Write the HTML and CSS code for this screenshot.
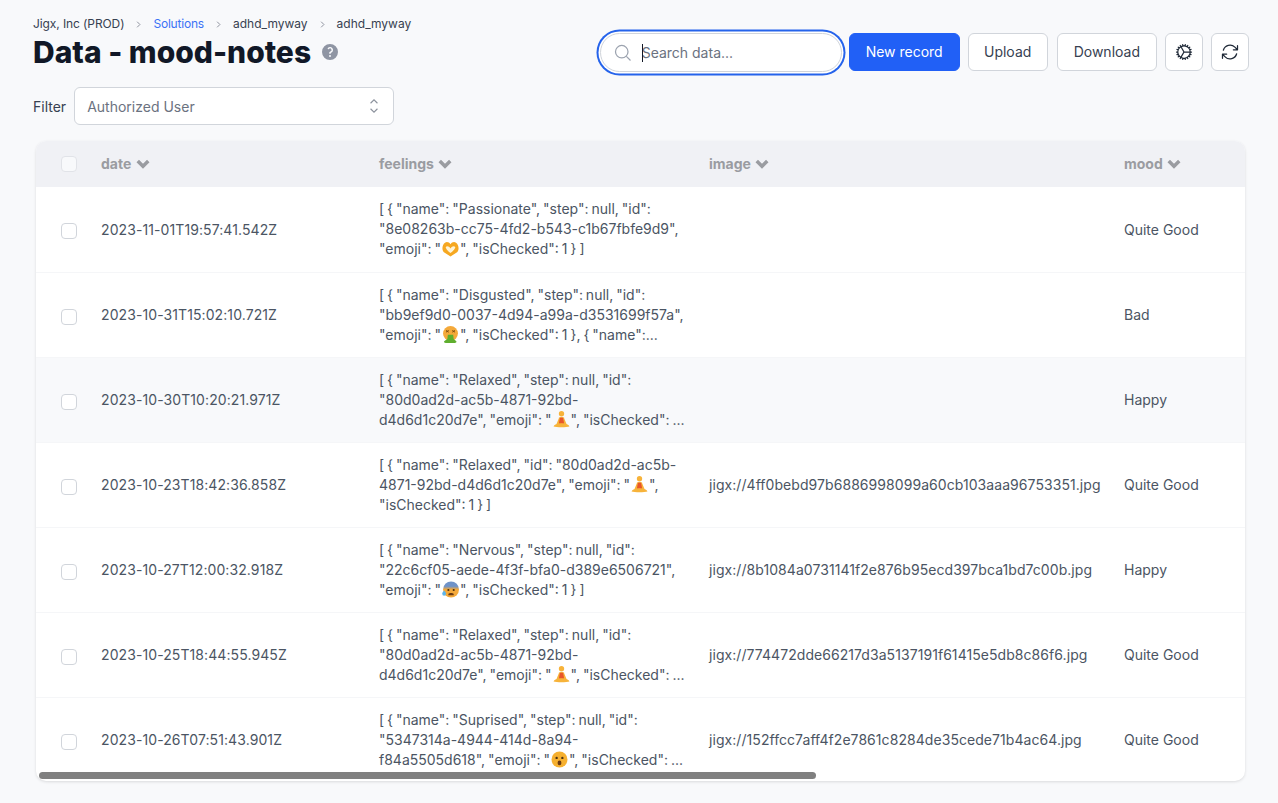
FILE: index.html
```html
<!DOCTYPE html>
<html lang="en">
<head>
    <meta charset="UTF-8">
    <meta name="viewport" content="width=device-width, initial-scale=1.0">
    <title>Data - mood-notes</title>
    <link rel="stylesheet" href="styles.css">
</head>
<body>
    <!-- emoji are drawn once here and reused in the table -->
    <svg class="defs" width="0" height="0">
        <symbol id="e-heart" viewBox="0 0 16 16">
            <path d="M8 15.500 1.800 11.500C-.2 9.800-.2 4.500 2.800 2.500c2-1.200 4-.3 5.200 1.500 1.200-1.800 3.200-2.700 5.200-1.500 3 2 3 7.300 1 9Z" fill="#f6a821"/>
            <path d="M8 8C6.800 5.800 4.500 5.200 3.600 6.500 3 7.500 5.500 10.300 8 12.200c2.500-1.900 5-4.700 4.400-5.700C11.500 5.200 9.200 5.800 8 8Z" fill="#fff4d6"/>
        </symbol>
        <symbol id="e-sick" viewBox="0 0 16 16">
            <circle cx="8" cy="7" r="7" fill="#f4a93a"/>
            <path d="M3.800 4.200 6.300 5.800M6.300 4.200 3.800 5.800M9.700 4.200l2.500 1.600M12.200 4.200 9.700 5.800" stroke="#7a4a10" stroke-width=".9"/>
            <path d="M5.500 8.200h5l.5 4 2.500 2.200c.4 1.200-.5 1.600-1.500 1.600H3.500c-1 0-1.900-.4-1.500-1.600L5 12.200Z" fill="#5fae2e"/>
        </symbol>
        <symbol id="e-lotus" viewBox="0 0 16 16">
            <circle cx="8" cy="2.600" r="2.500" fill="#f7b33a"/>
            <path d="M3.200 12.500 5.800 6.200c.3-.7 4.100-.7 4.400 0l2.600 6.300Z" fill="#f7b33a"/>
            <path d="M6.500 6.400h3l1 5.600h-5Z" fill="#e8562a"/>
            <path d="M.5 14.600c.5-1.800 3-3 7.500-3s7 1.200 7.500 3c-2.500 1-12.500 1-15 0Z" fill="#f7b33a"/>
        </symbol>
        <symbol id="e-fear" viewBox="0 0 16 16">
            <defs>
                <linearGradient id="fear-fill" x1="0" y1="0" x2="0" y2="1">
                    <stop offset="0.3" stop-color="#6f93c9"/>
                    <stop offset="0.5" stop-color="#f4a93a"/>
                </linearGradient>
            </defs>
            <circle cx="8.500" cy="8" r="7.500" fill="url(#fear-fill)"/>
            <circle cx="6" cy="8.500" r="1" fill="#4a2f10"/>
            <circle cx="11" cy="8.500" r="1" fill="#4a2f10"/>
            <path d="M6 12.300c1-1.300 4-1.300 5 0v1H6Z" fill="#6b3a12"/>
            <path d="M2 9c1.200 1.400 1.800 2.200 1.800 3a1.800 1.800 0 0 1-3.600 0c0-.8.600-1.600 1.800-3Z" fill="#5db4ea"/>
        </symbol>
        <symbol id="e-hush" viewBox="0 0 16 16">
            <circle cx="8" cy="8" r="7.500" fill="#f6b02f"/>
            <circle cx="5.300" cy="6.500" r="1.100" fill="#4a2f10"/>
            <circle cx="10.700" cy="6.500" r="1.100" fill="#4a2f10"/>
            <ellipse cx="8" cy="11.200" rx="1.800" ry="2.200" fill="#6b3a12"/>
        </symbol>
    </svg>

    <div class="page">
        <header class="page-header">
            <div>
                <nav class="crumbs">
                    <span class="crumb-tight">Jigx, Inc (PROD)</span>
                    <svg class="crumb-arrow" viewBox="0 0 24 24"><path d="M8.250 4.500l7.500 7.500-7.500 7.500"/></svg>
                    <a class="crumb-link">Solutions</a>
                    <svg class="crumb-arrow" viewBox="0 0 24 24"><path d="M8.250 4.500l7.500 7.500-7.500 7.500"/></svg>
                    <span>adhd_myway</span>
                    <svg class="crumb-arrow" viewBox="0 0 24 24"><path d="M8.250 4.500l7.500 7.500-7.500 7.500"/></svg>
                    <span>adhd_myway</span>
                </nav>
                <div class="title-row">
                    <h1>Data - mood-notes</h1>
                    <svg class="help" viewBox="0 0 20 20"><path fill-rule="evenodd" d="M18 10a8 8 0 11-16 0 8 8 0 0116 0zM8.940 6.940a.75.75 0 11-1.061-1.061 3 3 0 112.871 5.026v.345a.75.75 0 01-1.500 0v-.5c0-.72.57-1.172 1.081-1.287A1.500 1.500 0 108.940 6.940zM10 15a1 1 0 100-2 1 1 0 000 2z"/></svg>
                </div>
            </div>
            <div class="actions">
                <label class="search">
                    <svg class="search-icon" viewBox="0 0 24 24"><path d="M21 21l-5.197-5.197m0 0A7.500 7.500 0 105.196 5.196a7.500 7.500 0 0010.607 10.607z"/></svg>
                    <input type="text" placeholder="Search data...">
                    <span class="caret"></span>
                </label>
                <button class="btn btn-primary">New record</button>
                <button class="btn btn-upload">Upload</button>
                <button class="btn">Download</button>
                <button class="btn btn-icon">
                    <svg viewBox="0 0 24 24"><path d="M4.500 12a7.500 7.500 0 0015 0m-15 0a7.500 7.500 0 1115 0m-15 0H3m16.500 0H21m-1.500 0H12m-8.457 3.077l1.410-.513m14.095-5.130l1.410-.513M5.106 17.785l1.150-.964m11.490-9.642l1.149-.964M7.501 19.795l.75-1.300m7.500-12.990l.75-1.300m-6.063 16.658l.26-1.477m2.605-14.772l.26-1.477m0 17.726l-.26-1.477M10.698 4.614l-.26-1.477M16.500 19.794l-.75-1.299M7.500 4.205L12 12m6.894 5.785l-1.149-.964M6.256 7.178l-1.150-.964m15.352 8.864l-1.410-.513M4.954 9.435l-1.410-.514M12.002 12l-3.750 6.495"/></svg>
                </button>
                <button class="btn btn-icon">
                    <svg viewBox="0 0 24 24"><path d="M16.023 9.348h4.992v-.001M2.985 19.644v-4.992m0 0h4.992m-4.993 0l3.181 3.183a8.250 8.250 0 0013.803-3.700M4.031 9.865a8.250 8.250 0 0113.803-3.700l3.181 3.182m0-4.991v4.990"/></svg>
                </button>
            </div>
        </header>

        <div class="filter">
            <span class="filter-label">Filter</span>
            <div class="select">
                <span>Authorized User</span>
                <svg viewBox="0 0 24 24"><path d="M8.250 15L12 18.750 15.750 15m-7.500-6L12 5.250 15.750 9"/></svg>
            </div>
        </div>

        <div class="card">
            <table>
                <colgroup>
                    <col class="col-check"><col class="col-date"><col class="col-feelings"><col class="col-image"><col>
                </colgroup>
                <thead>
                    <tr>
                        <th><span class="check"></span></th>
                        <th>date <svg class="sort" viewBox="0 0 12 8"><path d="M1.500 1.500 6 6l4.500-4.500"/></svg></th>
                        <th>feelings <svg class="sort" viewBox="0 0 12 8"><path d="M1.500 1.500 6 6l4.500-4.500"/></svg></th>
                        <th>image <svg class="sort" viewBox="0 0 12 8"><path d="M1.500 1.500 6 6l4.500-4.500"/></svg></th>
                        <th>mood <svg class="sort" viewBox="0 0 12 8"><path d="M1.500 1.500 6 6l4.500-4.500"/></svg></th>
                    </tr>
                </thead>
                <tbody>
                    <tr>
                        <td><span class="check"></span></td>
                        <td class="date">2023-11-01T19:57:41.542Z</td>
                        <td class="json">[ { "name": "Passionate", "step": null, "id":<br>"8e08263b-cc75-4fd2-b543-c1b67fbfe9d9",<br>"emoji": "<svg class="emoji"><use href="#e-heart"/></svg>", "isChecked": 1 } ]</td>
                        <td class="file"></td>
                        <td>Quite Good</td>
                    </tr>
                    <tr>
                        <td><span class="check"></span></td>
                        <td class="date">2023-10-31T15:02:10.721Z</td>
                        <td class="json">[ { "name": "Disgusted", "step": null, "id":<br>"bb9ef9d0-0037-4d94-a99a-d3531699f57a",<br>"emoji": "<svg class="emoji"><use href="#e-sick"/></svg>", "isChecked": 1 }, { "name":...</td>
                        <td class="file"></td>
                        <td>Bad</td>
                    </tr>
                    <tr class="row-hover">
                        <td><span class="check"></span></td>
                        <td class="date">2023-10-30T10:20:21.971Z</td>
                        <td class="json">[ { "name": "Relaxed", "step": null, "id":<br>"80d0ad2d-ac5b-4871-92bd-<br>d4d6d1c20d7e", "emoji": "<svg class="emoji"><use href="#e-lotus"/></svg>", "isChecked": ...</td>
                        <td class="file"></td>
                        <td>Happy</td>
                    </tr>
                    <tr>
                        <td><span class="check"></span></td>
                        <td class="date">2023-10-23T18:42:36.858Z</td>
                        <td class="json">[ { "name": "Relaxed", "id": "80d0ad2d-ac5b-<br>4871-92bd-d4d6d1c20d7e", "emoji": "<svg class="emoji"><use href="#e-lotus"/></svg>",<br>"isChecked": 1 } ]</td>
                        <td class="file">jigx://4ff0bebd97b6886998099a60cb103aaa96753351.jpg</td>
                        <td>Quite Good</td>
                    </tr>
                    <tr>
                        <td><span class="check"></span></td>
                        <td class="date">2023-10-27T12:00:32.918Z</td>
                        <td class="json">[ { "name": "Nervous", "step": null, "id":<br>"22c6cf05-aede-4f3f-bfa0-d389e6506721",<br>"emoji": "<svg class="emoji"><use href="#e-fear"/></svg>", "isChecked": 1 } ]</td>
                        <td class="file">jigx://8b1084a0731141f2e876b95ecd397bca1bd7c00b.jpg</td>
                        <td>Happy</td>
                    </tr>
                    <tr>
                        <td><span class="check"></span></td>
                        <td class="date">2023-10-25T18:44:55.945Z</td>
                        <td class="json">[ { "name": "Relaxed", "step": null, "id":<br>"80d0ad2d-ac5b-4871-92bd-<br>d4d6d1c20d7e", "emoji": "<svg class="emoji"><use href="#e-lotus"/></svg>", "isChecked": ...</td>
                        <td class="file">jigx://774472dde66217d3a5137191f61415e5db8c86f6.jpg</td>
                        <td>Quite Good</td>
                    </tr>
                    <tr>
                        <td><span class="check"></span></td>
                        <td class="date">2023-10-26T07:51:43.901Z</td>
                        <td class="json">[ { "name": "Suprised", "step": null, "id":<br>"5347314a-4944-414d-8a94-<br>f84a5505d618", "emoji": "<svg class="emoji"><use href="#e-hush"/></svg>", "isChecked": ...</td>
                        <td class="file">jigx://152ffcc7aff4f2e7861c8284de35cede71b4ac64.jpg</td>
                        <td>Quite Good</td>
                    </tr>
                </tbody>
            </table>
            <div class="scroll-thumb"></div>
        </div>
    </div>
</body>
</html>
```

FILE: styles.css
```css
* {
    box-sizing: border-box;
}

body {
    margin: 0;
    height: 803px;
    overflow: hidden;
    background-color: #f8f9fb;
    font-family: Inter, "Noto Sans", sans-serif;
    font-size: 14px;
    color: #4b5563;
}

.defs {
    position: absolute;
}

.page {
    padding: 16px 29px 0 33px;
}

/* header */
.page-header {
    display: flex;
    justify-content: space-between;
    align-items: flex-start;
}

.crumbs {
    display: flex;
    align-items: center;
    height: 16px;
    font-size: 12px;
    line-height: 16px;
    color: #374151;
}

.crumb-tight {
    letter-spacing: -0.1px;
}

.crumb-link {
    letter-spacing: -0.2px;
    color: #3b72f6;
}

.crumb-arrow {
    width: 9px;
    height: 9px;
    margin: 0 10px;
    fill: none;
    stroke: #6b7280;
    stroke-width: 2;
}

.title-row {
    display: flex;
    align-items: center;
    gap: 9px;
    margin-top: 2px;
}

h1 {
    margin: 0;
    font-size: 30px;
    line-height: 36px;
    font-weight: 800;
    color: #111827;
}

.help {
    width: 20px;
    height: 20px;
    fill: #8f95a3;
}

.actions {
    display: flex;
    gap: 8px;
    padding-top: 17px;
}

.search {
    position: relative;
    display: flex;
    align-items: center;
    gap: 9px;
    width: 242px;
    height: 39px;
    margin-right: -1px;
    padding: 0 12px;
    background: #fff;
    border: 1px solid #d1d5db;
    border-radius: 20px;
    box-shadow: 0 0 0 1.500px #fff, 0 0 0 3.500px #2563eb;
}

.search-icon {
    flex: none;
    width: 20px;
    height: 20px;
    fill: none;
    stroke: #9ca3af;
    stroke-width: 1.500;
}

.search input {
    flex: 1;
    min-width: 0;
    padding: 0;
    border: 0;
    outline: 0;
    background: none;
    font: inherit;
}

.search input::placeholder {
    color: #6b7280;
    opacity: 1;
}

.caret {
    position: absolute;
    left: 41px;
    top: 10px;
    width: 1px;
    height: 18px;
    background: #111827;
}

.btn {
    height: 38px;
    padding: 0 16px 2px;
    background: #fff;
    border: 1px solid #d1d5db;
    border-radius: 6px;
    font-family: inherit;
    font-size: 14px;
    font-weight: 400;
    color: #374151;
}

.btn-primary {
    width: 111px;
    padding: 0 0 2px;
    background: #2160f6;
    border-color: #2160f6;
    color: #fff;
}

.btn-upload {
    width: 80px;
    margin-right: 1px;
    padding: 0 0 2px;
}

.btn-icon {
    display: flex;
    align-items: center;
    justify-content: center;
    width: 38px;
    padding: 0;
}

.btn-icon svg {
    width: 20px;
    height: 20px;
    fill: none;
    stroke: #1f2937;
    stroke-width: 1.500;
    stroke-linecap: round;
    stroke-linejoin: round;
}

/* filter */
.filter {
    display: flex;
    align-items: center;
    gap: 8px;
    margin-top: 15px;
}

.filter-label {
    color: #374151;
}

.select {
    display: flex;
    align-items: center;
    justify-content: space-between;
    width: 320px;
    height: 38px;
    padding: 0 8px 0 12px;
    background: #fff;
    border: 1px solid #d1d5db;
    border-radius: 6px;
    color: #6b7280;
}

.select svg {
    width: 22px;
    height: 22px;
    fill: none;
    stroke: #8b919c;
    stroke-width: 1.200;
}

/* table */
.card {
    position: relative;
    height: 640px;
    margin: 16px 4px 0 3px;
    overflow: hidden;
    background: #fff;
    border-radius: 10px;
    box-shadow: 0 1px 3px rgba(0, 0, 0, 0.12);
}

table {
    width: 100%;
    table-layout: fixed;
    border-collapse: collapse;
}

.col-check {
    width: 65px;
}

.col-date {
    width: 278px;
}

.col-feelings {
    width: 330px;
}

.col-image {
    width: 415px;
}

th {
    height: 46px;
    padding: 0;
    background: #f0f1f5;
    text-align: left;
    font-weight: 700;
    color: #9a9ca1;
}

th + th {
    padding-bottom: 2px;
}

td {
    height: 85px;
    padding: 0;
    border-bottom: 1px solid #f5f6f8;
    vertical-align: middle;
}

th:first-child,
td:first-child {
    padding-left: 25px;
}

.row-hover td {
    background: #f8f9fb;
}

.check {
    display: block;
    width: 16px;
    height: 16px;
    background: #fff;
    border: 1px solid #d1d5db;
    border-radius: 4px;
}

td .check {
    margin-top: 4px;
}

th .check {
    background: #f8f9fb;
    border-color: #e1e3e8;
}

.sort {
    width: 14px;
    height: 10px;
    margin-left: 1px;
    fill: none;
    stroke: #9a9ca1;
    stroke-width: 3;
}

.date {
    letter-spacing: 0.09px;
}

.file {
    letter-spacing: 0.06px;
}

.json {
    line-height: 20px;
    word-spacing: -1px;
    white-space: nowrap;
}

.emoji {
    width: 17px;
    height: 17px;
    margin: 0 1px;
    vertical-align: -3px;
}

.scroll-thumb {
    position: absolute;
    left: 3px;
    bottom: 2px;
    width: 777px;
    height: 7px;
    background: #808080;
    border-radius: 4px;
}
```
